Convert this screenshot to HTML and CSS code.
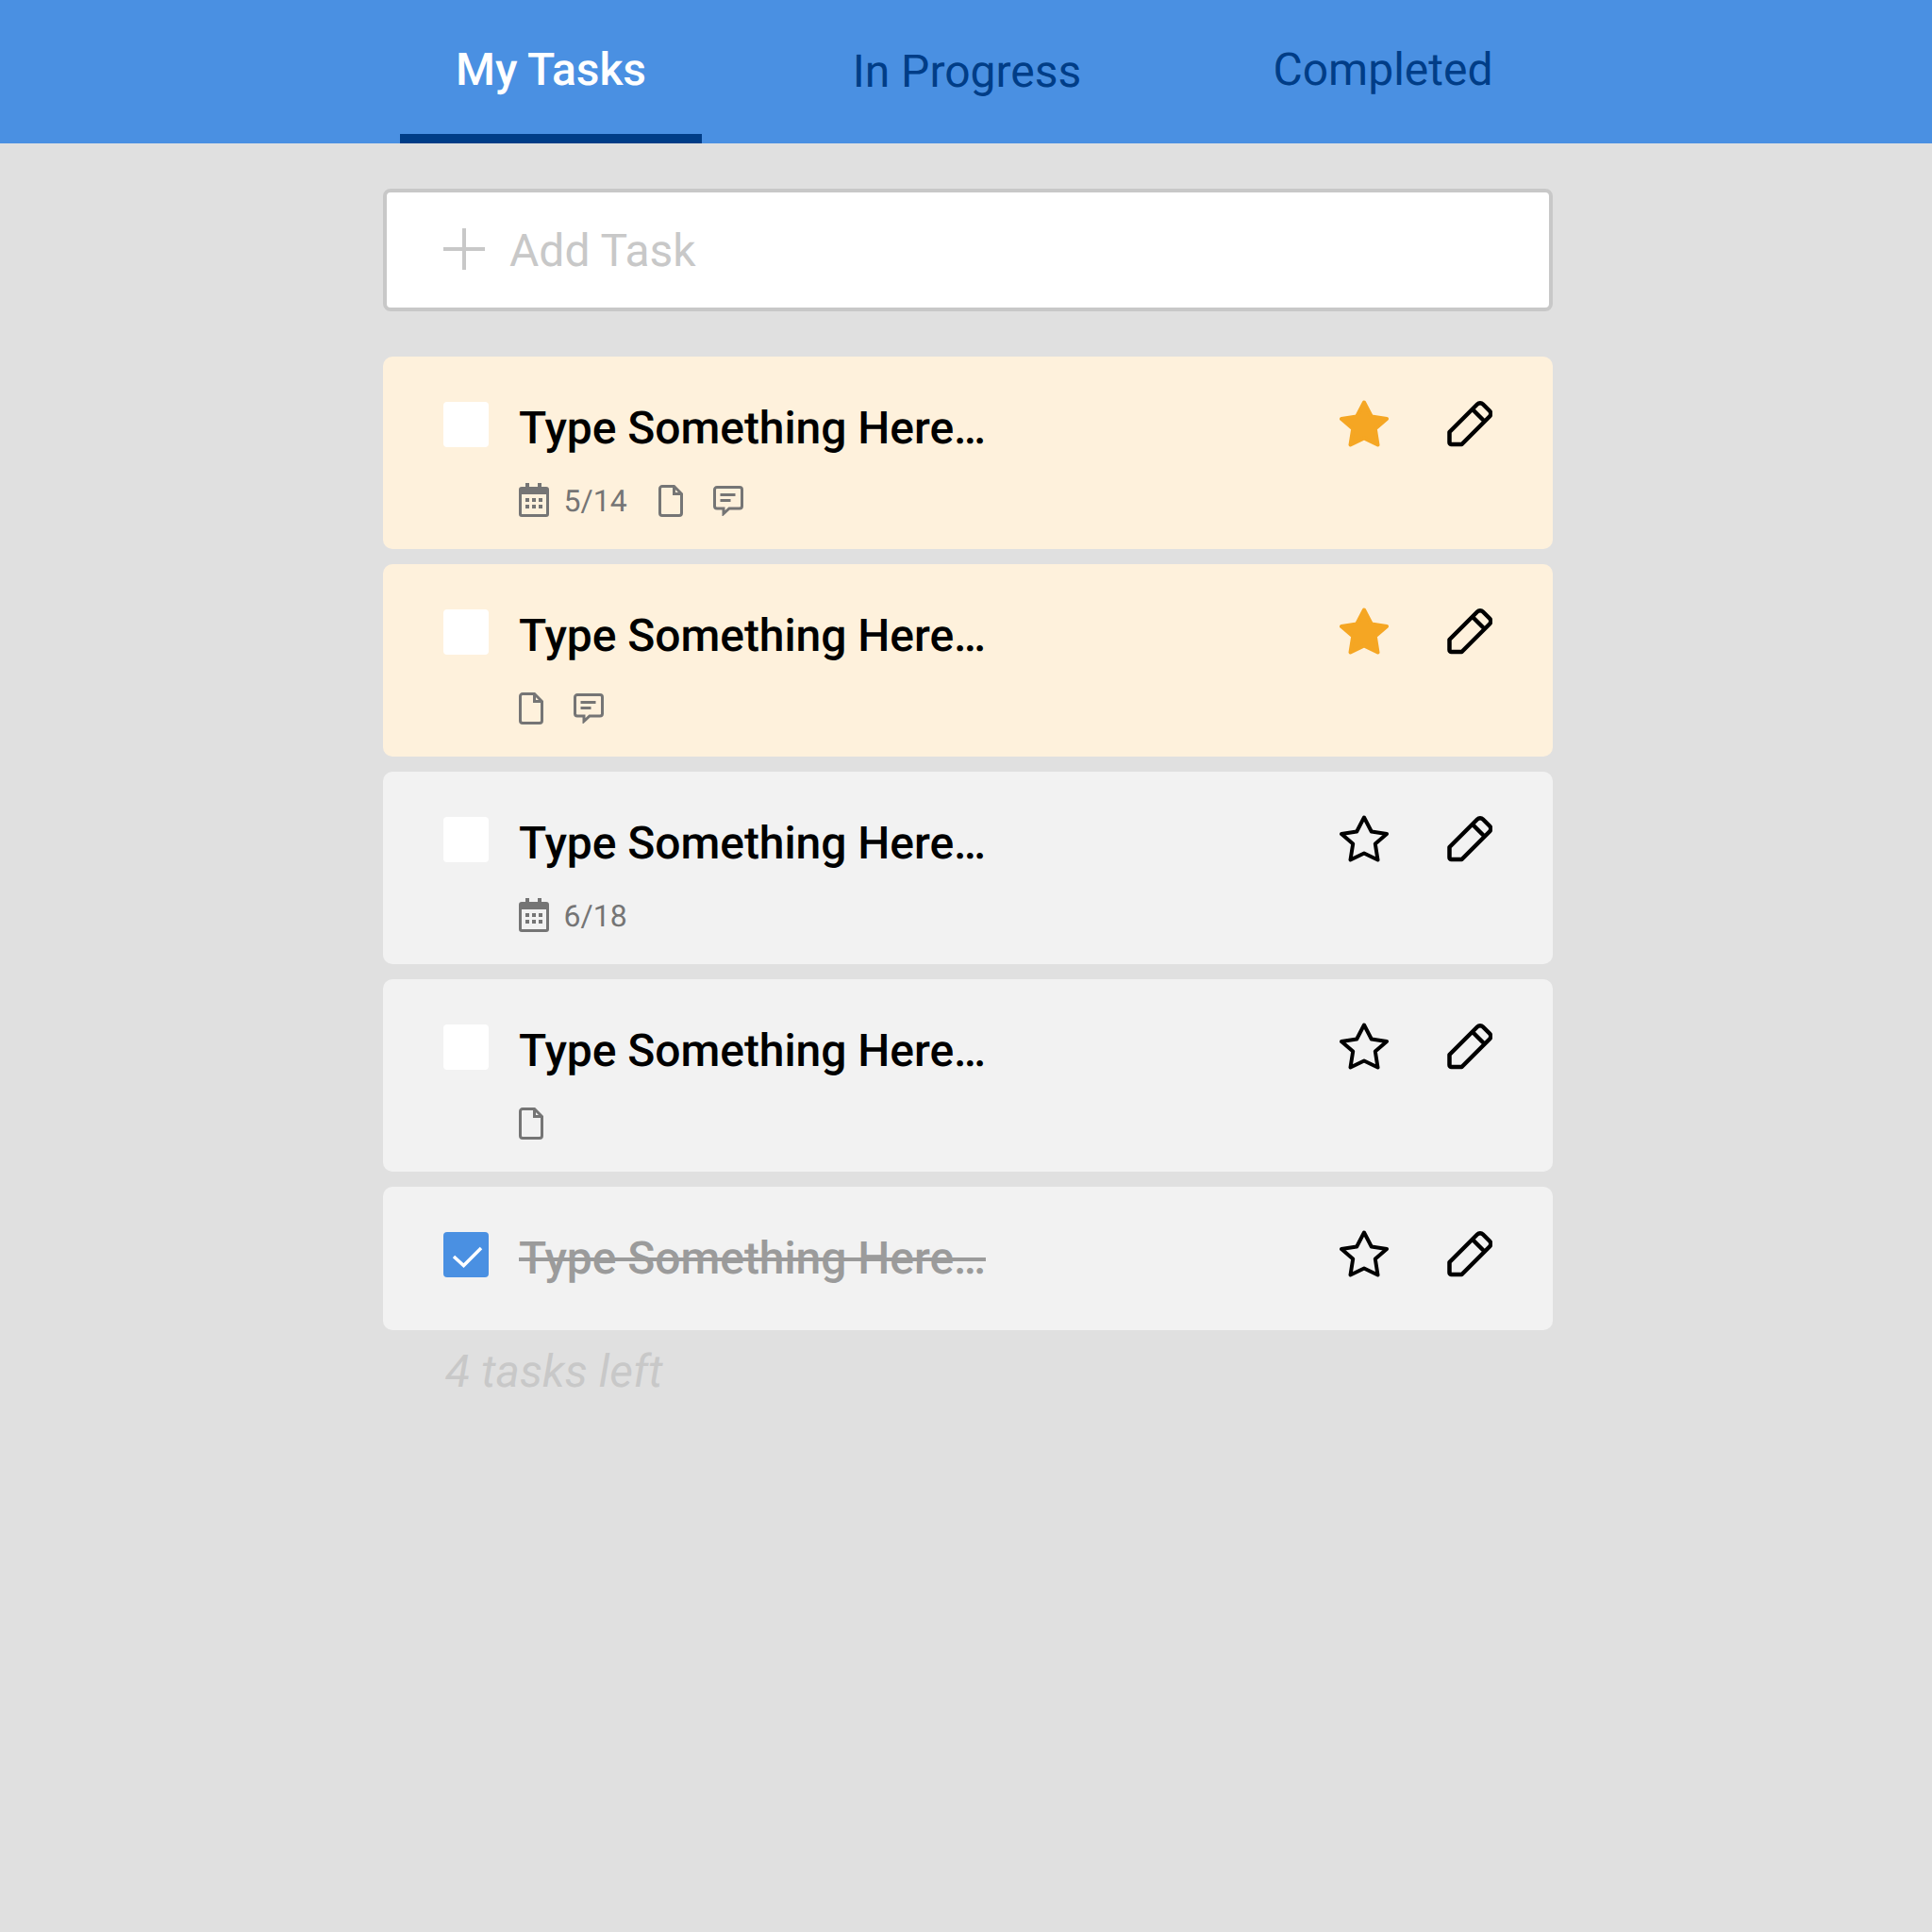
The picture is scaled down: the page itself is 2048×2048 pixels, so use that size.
FILE: index.html
```html
<!DOCTYPE html>
<html lang="en">
<head>
  <meta charset="UTF-8">
  <title>My Tasks</title>
  <link rel="stylesheet" href="styles.css">
</head>
<body>
  <nav class="tabs">
    <a class="tab active">My Tasks</a>
    <a class="tab tab-low">In Progress</a>
    <a class="tab">Completed</a>
  </nav>

  <main class="content">
    <div class="add-task">
      <svg class="plus" width="44" height="44" viewBox="0 0 44 44"><path d="M22 0V44M0 22H44"/></svg>
      <span>Add Task</span>
    </div>

    <ul class="task-list">
      <li class="task starred">
        <span class="check"></span>
        <div class="task-body">
          <div class="task-title">Type Something Here…</div>
          <div class="task-meta">
            <svg class="meta-icon" width="32" height="36" viewBox="0 0 32 36"><use href="#i-calendar"/></svg>
            <span class="task-date">5/14</span>
            <svg class="meta-icon low" width="26" height="34" viewBox="0 0 26 34"><use href="#i-file"/></svg>
            <svg class="meta-icon low" width="32" height="32" viewBox="0 0 32 32"><use href="#i-comment"/></svg>
          </div>
        </div>
        <div class="task-actions">
          <svg class="star" width="52" height="52" viewBox="0 0 52 52"><use href="#i-star"/></svg>
          <svg class="pencil" width="48" height="52" viewBox="0 0 48 52"><use href="#i-pencil"/></svg>
        </div>
      </li>

      <li class="task starred">
        <span class="check"></span>
        <div class="task-body">
          <div class="task-title">Type Something Here…</div>
          <div class="task-meta">
            <svg class="meta-icon low" width="26" height="34" viewBox="0 0 26 34"><use href="#i-file"/></svg>
            <svg class="meta-icon low" width="32" height="32" viewBox="0 0 32 32"><use href="#i-comment"/></svg>
          </div>
        </div>
        <div class="task-actions">
          <svg class="star" width="52" height="52" viewBox="0 0 52 52"><use href="#i-star"/></svg>
          <svg class="pencil" width="48" height="52" viewBox="0 0 48 52"><use href="#i-pencil"/></svg>
        </div>
      </li>

      <li class="task">
        <span class="check"></span>
        <div class="task-body">
          <div class="task-title">Type Something Here…</div>
          <div class="task-meta">
            <svg class="meta-icon" width="32" height="36" viewBox="0 0 32 36"><use href="#i-calendar"/></svg>
            <span class="task-date">6/18</span>
          </div>
        </div>
        <div class="task-actions">
          <svg class="star" width="52" height="52" viewBox="0 0 52 52"><use href="#i-star"/></svg>
          <svg class="pencil" width="48" height="52" viewBox="0 0 48 52"><use href="#i-pencil"/></svg>
        </div>
      </li>

      <li class="task">
        <span class="check"></span>
        <div class="task-body">
          <div class="task-title">Type Something Here…</div>
          <div class="task-meta">
            <svg class="meta-icon low" width="26" height="34" viewBox="0 0 26 34"><use href="#i-file"/></svg>
          </div>
        </div>
        <div class="task-actions">
          <svg class="star" width="52" height="52" viewBox="0 0 52 52"><use href="#i-star"/></svg>
          <svg class="pencil" width="48" height="52" viewBox="0 0 48 52"><use href="#i-pencil"/></svg>
        </div>
      </li>

      <li class="task done">
        <span class="check">
          <svg width="48" height="48" viewBox="0 0 48 48"><path d="M11 26L21.5 35.5L40 17"/></svg>
        </span>
        <div class="task-body">
          <div class="task-title">Type Something Here…</div>
        </div>
        <div class="task-actions">
          <svg class="star" width="52" height="52" viewBox="0 0 52 52"><use href="#i-star"/></svg>
          <svg class="pencil" width="48" height="52" viewBox="0 0 48 52"><use href="#i-pencil"/></svg>
        </div>
      </li>

      <li class="tasks-left">4 tasks left</li>
    </ul>
  </main>

  <svg class="icon-defs" width="0" height="0">
    <defs>
      <g id="i-calendar">
        <path class="solid" d="M7 0H11V5H7ZM20 0H24V5H20Z"/>
        <path class="solid" d="M3 4H29A3 3 0 0 1 32 7V33A3 3 0 0 1 29 36H3A3 3 0 0 1 0 33V7A3 3 0 0 1 3 4ZM3 12V32.500A.5 .5 0 0 0 3.500 33H28.500A.5 .5 0 0 0 29 32.500V12Z" fill-rule="evenodd"/>
        <path class="solid" d="M7 16H11V20H7ZM14 16H18V20H14ZM21 16H25V20H21ZM7 23H11V27H7ZM14 23H18V27H14ZM21 23H25V27H21Z"/>
      </g>
      <g id="i-file">
        <path class="line" d="M4 1.500H16.500L24.500 9.500V30A2.500 2.500 0 0 1 22 32.500H4A2.500 2.500 0 0 1 1.500 30V4A2.500 2.500 0 0 1 4 1.500ZM16.500 1.500V9.500H24.500"/>
      </g>
      <g id="i-comment">
        <path class="line" d="M4 1.500H28A2.500 2.500 0 0 1 30.500 4V21.500A2.500 2.500 0 0 1 28 24H17L11 29.500V24H4A2.500 2.500 0 0 1 1.500 21.500V4A2.500 2.500 0 0 1 4 1.500ZM7.500 9.500H23.500M7.500 15.500H18.500"/>
      </g>
      <path id="i-star" d="M26 2.500L33.800 17.500L50 20L37.800 30.500L40.500 47.500L26 40.500L11.500 47.500L14.200 30.500L2 20L18.200 17.500Z"/>
      <path id="i-pencil" d="M2.500 34V45A2 2 0 0 0 4.500 47H15.500L45 17.500A4.300 4.300 0 0 0 45 11.500L38 4.500A4.300 4.300 0 0 0 32 4.500ZM26.750 9.750L39.750 22.750"/>
    </defs>
  </svg>
</body>
</html>
```

FILE: styles.css
```css
* {
  box-sizing: border-box;
}

body {
  margin: 0;
  min-height: 2048px;
  background-color: #e0e0e0;
  font-family: Roboto, "Liberation Sans", sans-serif;
  font-size: 48px;
  line-height: 56px;
  text-rendering: geometricPrecision;
}

.tabs {
  display: flex;
  gap: 121px;
  height: 152px;
  padding-left: 424px;
  background-color: #4a90e2;
}

.tab {
  width: 320px;
  padding-top: 46px;
  text-align: center;
  color: #003d87;
}

.tab-low {
  padding-top: 48px;
}

.tab.active {
  color: white;
  font-weight: 500;
  letter-spacing: -0.1px;
  border-bottom: 10px solid #003d87;
}

.content {
  display: flex;
  flex-direction: column;
  gap: 48px;
  width: 1240px;
  margin-left: 406px;
  padding-top: 48px;
}

.add-task {
  display: flex;
  align-items: center;
  gap: 26px;
  height: 130px;
  padding-left: 60px;
  background: white;
  border: 4px solid #c8c8c8;
  border-radius: 8px;
  color: #c8c8c8;
}

.add-task span {
  margin-top: 2px;
}

.plus {
  margin-top: -2px;
  stroke: #c8c8c8;
  stroke-width: 4;
  fill: none;
}

.task-list {
  display: flex;
  flex-direction: column;
  gap: 16px;
  margin: 0;
  padding: 0;
  list-style: none;
}

.task {
  display: flex;
  padding: 48px 64px 34px;
  background-color: #f2f2f2;
  border-radius: 10px;
}

.task.starred {
  background-color: #fef1dc;
}

.check {
  flex: none;
  width: 48px;
  height: 48px;
  margin-right: 32px;
  background: white;
  border-radius: 4px;
}

.check svg {
  display: block;
  fill: none;
  stroke: white;
  stroke-width: 3.5;
}

.task-body {
  display: flex;
  flex-direction: column;
  flex: 1;
}

.task-title {
  margin-bottom: 14px;
  color: black;
  font-weight: 500;
  letter-spacing: -0.06px;
}

.task-meta {
  display: flex;
  align-items: center;
  height: 36px;
  margin-top: 16px;
  color: #757575;
  font-size: 32px;
}

.meta-icon {
  display: block;
  margin-right: 32px;
}

.meta-icon.low {
  margin-top: 2px;
}

.task-date {
  margin-top: 2px;
  margin-left: -16.5px;
  margin-right: 33.5px;
}

.solid {
  fill: #757575;
}

.line {
  fill: none;
  stroke: #757575;
  stroke-width: 3;
}

.task-actions {
  display: flex;
  gap: 62px;
  height: 52px;
  margin-top: -2px;
}

.star {
  fill: none;
  stroke: black;
  stroke-width: 4;
  stroke-linejoin: round;
}

.pencil {
  fill: none;
  stroke: black;
  stroke-width: 4.500;
  stroke-linejoin: round;
}

.starred .star {
  fill: #f5a623;
  stroke: #f5a623;
}

.done .check {
  background-color: #4a90e2;
}

.done .task-title {
  color: #9b9b9b;
  text-decoration: line-through;
}

.tasks-left {
  padding-left: 66px;
  color: #c8c8c8;
  font-style: italic;
  letter-spacing: 0.1px;
}

.icon-defs {
  position: absolute;
}
```
